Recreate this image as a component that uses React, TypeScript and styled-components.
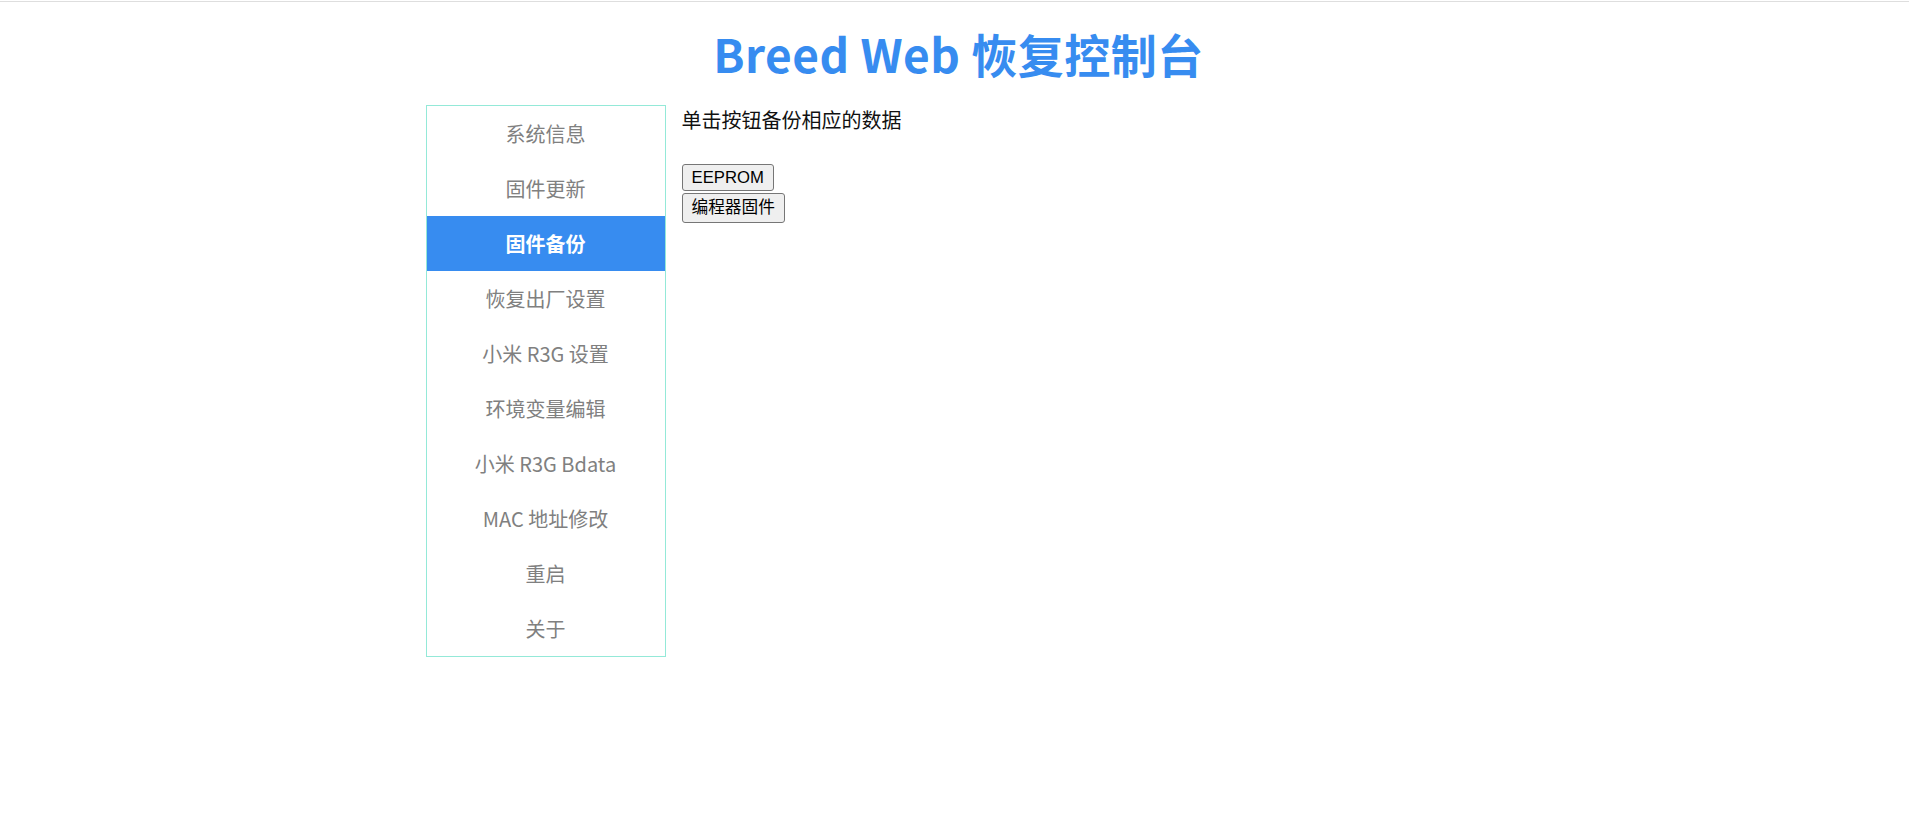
import React from "react";
import styled, { createGlobalStyle } from "styled-components";

const Blue = "#378cf0";

const GlobalStyle = createGlobalStyle`
    body {
        margin: 0;
        background: #fff;
        font-family: "Liberation Sans", "Noto Sans CJK SC", sans-serif;
    }
`;

const TopRule = styled.div`
    margin-top: 1px;
    height: 1px;
    background: #dedede;
`;

const Title = styled.h1`
    margin: 0;
    padding: 22px 0 0 8px;
    height: 103px;
    box-sizing: border-box;
    text-align: center;
    font-family: "Noto Sans CJK SC", sans-serif;
    font-size: 46px;
    line-height: 58px;
    font-weight: 700;
    letter-spacing: 0.5px;
    color: ${Blue};
`;

const Layout = styled.div`
    display: flex;
    align-items: flex-start;
    gap: 16px;
    width: 1058px;
    margin: 0 auto;
`;

const Sidebar = styled.ul`
    list-style: none;
    margin: 0;
    padding: 0;
    width: 238px;
    border: 1px solid #94e9d8;
`;

interface ItemProps {
    $active?: boolean;
}
const NavItem = styled.li<ItemProps>`
    height: 55px;
    display: flex;
    align-items: center;
    justify-content: center;
    font-family: "Noto Sans CJK SC", sans-serif;
    font-size: 20px;
    font-weight: ${(props) => (props.$active ? 700 : 400)};
    color: ${(props) => (props.$active ? "#fff" : "#808080")};
    background: ${(props) => (props.$active ? Blue : "transparent")};
    cursor: pointer;
`;

const Content = styled.div`
    display: flex;
    flex-direction: column;
    align-items: flex-start;
    padding-top: 1px;
`;

const Hint = styled.p`
    margin: 0 0 30px;
    font-family: "Noto Sans CJK SC", sans-serif;
    font-size: 20px;
    line-height: 28px;
    color: #111;
`;

const Buttons = styled.div`
    display: flex;
    flex-direction: column;
    align-items: flex-start;
    gap: 2px;
`;

interface ButtonProps {
    $cjk?: boolean;
}
const Button = styled.button<ButtonProps>`
    box-sizing: border-box;
    height: ${(props) => (props.$cjk ? "30px" : "27px")};
    padding: 0 9px;
    border: 1px solid #767676;
    border-radius: 3px;
    background: #efefef;
    color: #000;
    font-family: "Liberation Sans", "Noto Sans CJK SC", sans-serif;
    font-size: 16.7px;
    line-height: ${(props) => (props.$cjk ? "26px" : "23px")};
    cursor: pointer;
`;

const items = [
    "系统信息",
    "固件更新",
    "固件备份",
    "恢复出厂设置",
    "小米 R3G 设置",
    "环境变量编辑",
    "小米 R3G Bdata",
    "MAC 地址修改",
    "重启",
    "关于",
];

export default function App() {
    return (
        <>
            <GlobalStyle />
            <TopRule />
            <Title>Breed Web 恢复控制台</Title>
            <Layout>
                <Sidebar>
                    {items.map((item) => (
                        <NavItem key={item} $active={item === "固件备份"}>
                            {item}
                        </NavItem>
                    ))}
                </Sidebar>
                <Content>
                    <Hint>单击按钮备份相应的数据</Hint>
                    <Buttons>
                        <Button>EEPROM</Button>
                        <Button $cjk>编程器固件</Button>
                    </Buttons>
                </Content>
            </Layout>
        </>
    );
}
